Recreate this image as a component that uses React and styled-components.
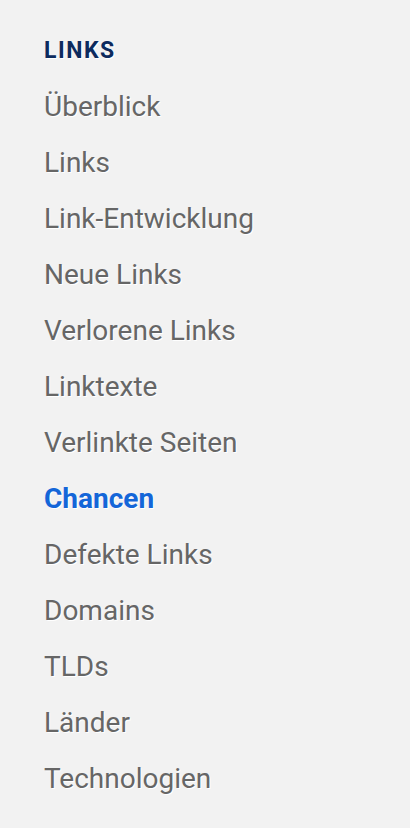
import React from 'react';
import styled, { createGlobalStyle } from 'styled-components';

const GlobalStyle = createGlobalStyle`
  html, body {
    margin: 0;
    padding: 0;
    background: #f2f2f2;
  }
  body {
    font-family: Roboto, "Noto Sans", sans-serif;
  }
`;

const Nav = styled.nav`
  padding: 36px 44px 0;
  display: flex;
  flex-direction: column;
`;

const Heading = styled.h2`
  margin: 0 0 12px;
  font-size: 23px;
  line-height: 30px;
  font-weight: 700;
  letter-spacing: 1.5px;
  color: #0d2b5e;
  text-shadow: 1px 1px 0 #fff;
`;

const List = styled.ul`
  list-style: none;
  margin: 0;
  padding: 0;
`;

const Item = styled.li`
  height: 56px;
  display: flex;
  align-items: center;
`;

const Link = styled.a`
  font-size: 28px;
  text-decoration: none;
  color: ${p => (p.$active ? '#1466d8' : '#666666')};
  font-weight: ${p => (p.$active ? 700 : 400)};
  text-shadow: 1px 1px 0 #fff;
  cursor: pointer;
`;

const items = [
  'Überblick',
  'Links',
  'Link-Entwicklung',
  'Neue Links',
  'Verlorene Links',
  'Linktexte',
  'Verlinkte Seiten',
  'Chancen',
  'Defekte Links',
  'Domains',
  'TLDs',
  'Länder',
  'Technologien',
];

const App = () => (
  <>
    <GlobalStyle />
    <Nav>
      <Heading>LINKS</Heading>
      <List>
        {items.map(name => (
          <Item key={name}>
            <Link $active={name === 'Chancen'}>{name}</Link>
          </Item>
        ))}
      </List>
    </Nav>
  </>
);

export default App;
